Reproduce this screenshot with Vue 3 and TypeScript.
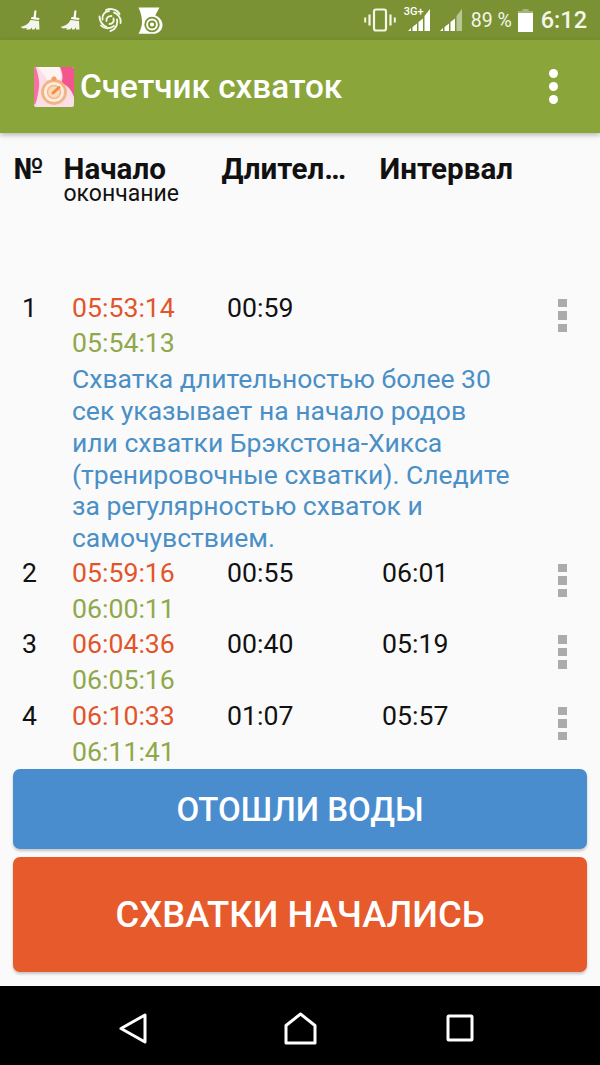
<script setup lang="ts">
interface Row {
  num: number
  start: string
  end: string
  duration: string
  interval: string
  note?: string
}

const rows: Row[] = [
  {
    num: 1,
    start: '05:53:14',
    end: '05:54:13',
    duration: '00:59',
    interval: '',
    note: 'Схватка длительностью более 30\nсек указывает на начало родов\nили схватки Брэкстона-Хикса\n(тренировочные схватки). Следите\nза регулярностью схваток и\nсамочувствием.',
  },
  { num: 2, start: '05:59:16', end: '06:00:11', duration: '00:55', interval: '06:01' },
  { num: 3, start: '06:04:36', end: '06:05:16', duration: '00:40', interval: '05:19' },
  { num: 4, start: '06:10:33', end: '06:11:41', duration: '01:07', interval: '05:57' },
]
</script>

<template>
  <div class="screen">
    <div class="statusBar">
      <svg class="broom" width="20" height="20" viewBox="0 0 20 20">
        <path fill="#fff" d="M14.5 0.5 L16.5 0.5 L15.8 7.5 L19.5 8 L19 10 L11 9 L11.5 7 L13.5 7.3 Z" />
        <path fill="#f4f4ec" d="M10.5 10 L19 11 L19.5 19.5 L16 19.5 L16 17 L14.5 19.5 L12 19.5 L12 17.5 L10 19.5 L6 19.5 L7 18 L3 18.5 L0.5 17 C5 16 8.5 14 10.5 10 Z" />
      </svg>
      <svg class="broom second" width="20" height="20" viewBox="0 0 20 20">
        <path fill="#fff" d="M14.5 0.5 L16.5 0.5 L15.8 7.5 L19.5 8 L19 10 L11 9 L11.5 7 L13.5 7.3 Z" />
        <path fill="#f4f4ec" d="M10.5 10 L19 11 L19.5 19.5 L16 19.5 L16 17 L14.5 19.5 L12 19.5 L12 17.5 L10 19.5 L6 19.5 L7 18 L3 18.5 L0.5 17 C5 16 8.5 14 10.5 10 Z" />
      </svg>
      <svg class="spiral" width="24" height="24" viewBox="0 0 24 24" fill="none" stroke="#f4f6e8" stroke-width="1.9" stroke-linecap="round">
        <path d="M8 2 C12 0 19 1 21.5 6" />
        <path d="M16 4.5 C19.5 5.5 23.5 10 22.5 15" />
        <path d="M19 11.5 C20 17 17 22 12.5 23" />
        <path d="M16 18 C12 21 6 21 3 17.5" />
        <path d="M8.5 19 C4.5 17.5 1.5 13 1.5 8.5" />
        <path d="M4.5 11.5 C4 7.5 6 3.5 11 3" />
        <path d="M8.5 13 C8 10 10 8 13.5 8" />
        <path d="M15.5 10.5 C16.5 13.5 14.5 16 11.5 16" />
      </svg>
      <svg class="scale" width="25" height="27" viewBox="0 0 25 27">
        <path fill="#fff" d="M0.5 0.5 H21.5 L18.5 6 C17.8 7 17.5 7.5 17.5 8.5 C21.5 10 24.5 13.5 24.5 18 C24.5 23.5 20 26.8 15 26.8 H0.5 C3 22 4.2 18.5 4 14 C3.8 9 2.5 5 0.5 0.5 Z" />
        <circle cx="14" cy="17.5" r="6.8" fill="none" stroke="#7a9233" stroke-width="1.8" />
        <circle cx="14" cy="17.5" r="3" fill="none" stroke="#7a9233" stroke-width="1.8" />
      </svg>
      <div class="spacer"></div>
      <svg class="vibrate" width="32" height="24" viewBox="0 0 32 24" fill="none" stroke="#f4f6e8">
        <rect x="10" y="1.5" width="12" height="21" rx="2" stroke-width="2.2" />
        <path stroke-width="2.2" d="M5.5 6.5 V17.5 M26.5 6.5 V17.5" />
        <path stroke-width="2" d="M1.2 9.5 V14.5 M30.8 9.5 V14.5" />
      </svg>
      <div class="signal first">
        <span class="netLabel">3G+</span>
        <svg width="24" height="24" viewBox="0 0 24 24">
          <path fill="#fff" d="M1 23 H4 V20 Z M5.5 23 H10 V15.5 L5.5 19 Z M11.5 23 H16 V10.5 L11.5 14 Z M17.5 23 H23 V1 L17.5 8 Z" />
        </svg>
      </div>
      <svg class="signal second" width="24" height="24" viewBox="0 0 24 24">
        <path fill="#fff" d="M1 23 H4 V20 Z M5.5 23 H10 V15.5 L5.5 19 Z M11.5 23 H16 V10.5 L11.5 14 Z" />
        <path fill="#b9c795" d="M17.5 23 H23 V1 L17.5 8 Z" />
      </svg>
      <span class="battery">89 %</span>
      <svg class="batteryIcon" width="15" height="23" viewBox="0 0 15 23">
        <path fill="#a4b677" d="M4.5 0 H10.5 V2 H15 V6 H0 V2 H4.5 Z" />
        <rect x="0" y="4" width="15" height="19" fill="#fff" />
      </svg>
      <span class="clock">6:12</span>
    </div>

    <div class="toolbar">
      <svg class="appIcon" width="40" height="40" viewBox="0 0 40 40">
        <rect width="40" height="40" rx="2" fill="#fbdfe6" />
        <path fill="#f4558d" d="M26 0 H38 Q40 0 40 2 V30 C38 24 34 18 27 16 C30 11 28 5 26 0 Z" />
        <path fill="#f7729f" d="M0 2 Q0 0 2 0 C3 6 6 12 5 20 C4 28 3 33 1 38 Q0 37 0 36 Z" />
        <path fill="#fff3f3" d="M4 0 H25 C27 6 28 10 25 15 L14 14 C12 10 8 6 4 0 Z" />
        <circle cx="20" cy="25" r="11.5" fill="#fdeee4" stroke="#f5b283" stroke-width="2.8" />
        <circle cx="20" cy="25" r="6.5" fill="#fbd9bd" stroke="#f6b98e" stroke-width="1.5" />
        <rect x="17.5" y="9.5" width="5" height="4.5" rx="2" fill="#f4a060" />
        <path fill="none" stroke="#ef8f3f" stroke-width="3" stroke-linecap="round" d="M19 26 L25 20.5" />
      </svg>
      <span class="title">Счетчик схваток</span>
      <div class="spacer"></div>
      <div class="menu">
        <i></i>
        <i></i>
        <i></i>
      </div>
    </div>

    <div class="content">
      <div class="header">
        <div class="colNum">№</div>
        <div class="colStart">
          <div class="headTitle">Начало</div>
          <div class="headSub">окончание</div>
        </div>
        <div class="colHead colDuration">Длител…</div>
        <div class="colHead">Интервал</div>
      </div>

      <div class="list">
        <div v-for="row in rows" :key="row.num" class="row">
          <div>{{ row.num }}</div>
          <div>
            <div class="start">{{ row.start }}</div>
            <div class="end">{{ row.end }}</div>
          </div>
          <div>{{ row.duration }}</div>
          <div>{{ row.interval }}</div>
          <div class="rowMenu">
            <i></i>
            <i></i>
            <i></i>
          </div>
          <div v-if="row.note" class="note">{{ row.note }}</div>
        </div>
      </div>

      <div class="actions">
        <button class="btn water">ОТОШЛИ ВОДЫ</button>
        <button class="btn contractions">СХВАТКИ НАЧАЛИСЬ</button>
      </div>
    </div>

    <div class="navBar">
      <svg width="28" height="31" viewBox="0 0 28 31" fill="none" stroke="#fff" stroke-width="3" stroke-linejoin="round">
        <path d="M26 2 V29 L2 15.5 Z" />
      </svg>
      <svg width="33" height="33" viewBox="0 0 33 33" fill="none" stroke="#fff" stroke-width="3" stroke-linejoin="round">
        <path d="M2 31 V13.5 L16.5 2 L31 13.5 V31 Z" />
      </svg>
      <svg width="28" height="28" viewBox="0 0 28 28" fill="none" stroke="#fff" stroke-width="3" stroke-linejoin="round">
        <rect x="2" y="2" width="24" height="24" rx="1" />
      </svg>
    </div>
  </div>
</template>

<style>
html,
body {
  margin: 0;
  background: #fafafa;
}
</style>

<style scoped>
.screen {
  display: flex;
  flex-direction: column;
  width: 600px;
  height: 1065px;
  overflow: hidden;
  background: #fafafa;
  color: #111;
  font-family: Roboto, "Liberation Sans", sans-serif;
}

.spacer {
  flex: 1;
}

.statusBar {
  display: flex;
  align-items: center;
  flex: 0 0 40px;
  padding: 0 13px 0 20px;
  background: #7a9233;
  color: #f4f6e8;
}

.broom.second {
  margin-left: 20px;
}

.spiral {
  margin-left: 18px;
}

.scale {
  margin-left: 16px;
}

.vibrate {
  margin-right: 11px;
}

.signal.first {
  position: relative;
  width: 24px;
  height: 24px;
  margin-right: 8px;
}

.signal.first svg {
  display: block;
}

.netLabel {
  position: absolute;
  top: -3px;
  left: -3px;
  color: #fff;
  font-size: 11px;
  font-weight: 500;
}

.signal.second {
  margin-right: 8px;
}

.battery {
  width: 47px;
  font-size: 19.5px;
  white-space: nowrap;
}

.batteryIcon {
  margin-right: 8px;
}

.clock {
  font-size: 23.5px;
  font-weight: 500;
}

.toolbar {
  position: relative;
  z-index: 1;
  display: flex;
  align-items: center;
  flex: 0 0 93px;
  box-sizing: border-box;
  padding: 0 42px 0 34px;
  background: #8aa63a;
  box-shadow: 0 2px 5px rgba(0, 0, 0, 0.28);
}

.appIcon {
  margin-right: 6px;
}

.title {
  color: #fff;
  font-size: 33.3px;
  font-weight: 500;
}

.menu {
  display: flex;
  flex-direction: column;
  gap: 4px;
}

.menu i {
  width: 9px;
  height: 9px;
  border-radius: 50%;
  background: #fff;
}

.content {
  display: flex;
  flex: 1;
  flex-direction: column;
  min-height: 0;
}

.header {
  display: grid;
  grid-template-columns: 50px 158px 158px 1fr;
  flex: 0 0 157.5px;
  box-sizing: border-box;
  padding: 19px 0 0 13.5px;
  font-size: 29.6px;
  font-weight: 700;
}

.colNum,
.headTitle,
.colHead {
  line-height: 35px;
}

.headSub {
  margin-top: -6px;
  font-size: 23px;
  font-weight: 400;
  line-height: 25px;
}

.colDuration {
  white-space: nowrap;
}

.list {
  flex: 1;
  min-height: 0;
  overflow: hidden;
}

.row {
  display: grid;
  grid-template-columns: 50px 155px 155px 1fr auto;
  padding: 0 33px 0 22px;
  font-size: 26.67px;
  line-height: 35.75px;
}

.start {
  color: #e2552b;
}

.end {
  color: #8fa84a;
}

.rowMenu {
  display: flex;
  flex-direction: column;
  gap: 4px;
  padding-top: 8px;
}

.rowMenu i {
  width: 9px;
  height: 8.5px;
  background: #ababab;
}

.note {
  grid-column: 2 / -1;
  margin: 1.2px 0 2px;
  color: #4a8fc6;
  font-size: 26.5px;
  line-height: 31.8px;
  white-space: pre-line;
}

.actions {
  display: flex;
  flex-direction: column;
  gap: 8px;
  padding: 3px 13px 14px;
}

.btn {
  border: none;
  border-radius: 7px;
  color: #fff;
  font-family: inherit;
  font-weight: 500;
  box-shadow: 0 2px 3px rgba(0, 0, 0, 0.22);
}

.water {
  height: 80px;
  background: #4a8dcf;
  font-size: 33px;
}

.contractions {
  height: 115px;
  background: #e65a2c;
  font-size: 36.4px;
}

.navBar {
  display: grid;
  grid-template-columns: 165px 162px 1fr;
  align-items: center;
  flex: 0 0 79px;
  box-sizing: border-box;
  padding: 5px 0 0 119px;
  background: #000;
}
</style>
